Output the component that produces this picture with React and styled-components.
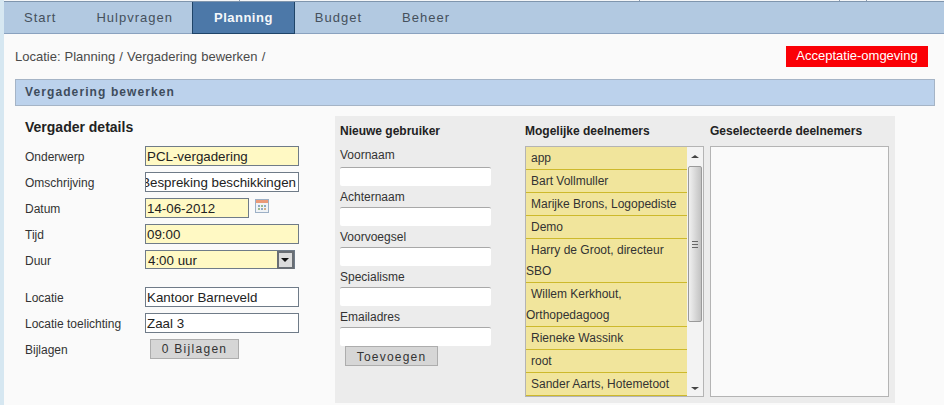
import React from 'react';
import styled, { createGlobalStyle } from 'styled-components';

const TABS = ['Start', 'Hulpvragen', 'Planning', 'Budget', 'Beheer'];
const TOP_CELLS = [236, 400, 200, 27];
const DETAIL_ROWS = [
  { label: 'Onderwerp', value: 'PCL-vergadering', filled: true },
  { label: 'Omschrijving', value: 'Bespreking beschikkingen', clipped: true },
];
const USER_FIELDS = ['Voornaam', 'Achternaam', 'Voorvoegsel', 'Specialisme', 'Emailadres'];
const PARTICIPANTS = [
  'app',
  'Bart Vollmuller',
  'Marijke Brons, Logopediste',
  'Demo',
  'Harry de Groot, directeur SBO',
  'Willem Kerkhout, Orthopedagoog',
  'Rieneke Wassink',
  'root',
  'Sander Aarts, Hotemetoot',
];

function CalendarIcon() {
  return (
    <CalendarSvg width="14" height="14" viewBox="0 0 14 14">
      <rect x="0.5" y="0.5" width="13" height="13" fill="#f0f3f6" stroke="#9db0c6" />
      <rect x="1" y="1" width="12" height="3" fill="#eb9a78" />
      <rect x="3" y="6" width="2" height="2" fill="#8fa8c4" />
      <rect x="6" y="6" width="2" height="2" fill="#9dbb8c" />
      <rect x="9" y="6" width="2" height="2" fill="#8fa8c4" />
      <rect x="3" y="9" width="2" height="2" fill="#9dbb8c" />
      <rect x="6" y="9" width="2" height="2" fill="#8fa8c4" />
      <rect x="9" y="9" width="2" height="2" fill="#d2b088" />
    </CalendarSvg>
  );
}

export default function App() {
  return (
    <>
      <GlobalStyle />
      <Page>
        <TopLine>
          {TOP_CELLS.map((width) => (
            <TopCell key={width} $width={width} />
          ))}
        </TopLine>
        <NavBar>
          {TABS.map((tab) => (
            <Tab key={tab} $active={tab === 'Planning'}>
              {tab}
            </Tab>
          ))}
        </NavBar>
        <Content>
          <BreadcrumbRow>
            <Breadcrumb>
              Locatie:<Crumbs>Planning / Vergadering bewerken /</Crumbs>
            </Breadcrumb>
            <EnvBadge>Acceptatie-omgeving</EnvBadge>
          </BreadcrumbRow>
          <SectionBar>Vergadering bewerken</SectionBar>
          <Columns>
            <Details>
              <DetailsTitle>Vergader details</DetailsTitle>
              <FormGrid>
                {DETAIL_ROWS.map((row) => (
                  <React.Fragment key={row.label}>
                    <FieldLabel>{row.label}</FieldLabel>
                    <TextBox $filled={row.filled} $clipped={row.clipped}>
                      <span>{row.value}</span>
                    </TextBox>
                  </React.Fragment>
                ))}
                <FieldLabel>Datum</FieldLabel>
                <DateRow>
                  <TextBox $filled $width={104}>
                    <span>14-06-2012</span>
                  </TextBox>
                  <CalendarIcon />
                </DateRow>
                <FieldLabel>Tijd</FieldLabel>
                <TextBox $filled>
                  <span>09:00</span>
                </TextBox>
                <FieldLabel>Duur</FieldLabel>
                <SelectBox>
                  <span>4:00 uur</span>
                  <SelectArrow />
                </SelectBox>
                <Spacer />
                <FieldLabel>Locatie</FieldLabel>
                <TextBox>
                  <span>Kantoor Barneveld</span>
                </TextBox>
                <FieldLabel>Locatie toelichting</FieldLabel>
                <TextBox>
                  <span>Zaal 3</span>
                </TextBox>
                <FieldLabel>Bijlagen</FieldLabel>
                <AttachButton>0 Bijlagen</AttachButton>
              </FormGrid>
            </Details>
            <GreyPanel>
              <NewUser>
                <ColumnTitle>Nieuwe gebruiker</ColumnTitle>
                {USER_FIELDS.map((field, index) => (
                  <UserField key={field}>
                    <UserLabel $first={index === 0}>{field}</UserLabel>
                    <UserInput />
                  </UserField>
                ))}
                <AddButton>Toevoegen</AddButton>
              </NewUser>
              <ListColumn>
                <ColumnTitle>Mogelijke deelnemers</ColumnTitle>
                <ListBox>
                  <ListItems>
                    {PARTICIPANTS.map((name) => (
                      <ListItem key={name}>{name}</ListItem>
                    ))}
                  </ListItems>
                  <ScrollBar>
                    <ArrowUp />
                    <Thumb>
                      <Grip />
                    </Thumb>
                    <ArrowDown />
                  </ScrollBar>
                </ListBox>
              </ListColumn>
              <ListColumn>
                <ColumnTitle>Geselecteerde deelnemers</ColumnTitle>
                <ListBox />
              </ListColumn>
            </GreyPanel>
          </Columns>
        </Content>
      </Page>
    </>
  );
}

const GlobalStyle = createGlobalStyle`
  html, body {
    margin: 0;
    padding: 0;
    height: 405px;
    overflow: hidden;
    background: #fafafa;
    font-family: "Liberation Sans", Arial, sans-serif;
  }
  * {
    box-sizing: border-box;
  }
`;

const Page = styled.div`
  height: 405px;
  border-left: 4px solid #d6e7f1;
  overflow: hidden;
`;

const TopLine = styled.div`
  height: 2px;
  display: flex;
  background: #f4f6f8;
  border-bottom: 1px solid #7f95ad;
`;

const TopCell = styled.div`
  width: ${({ $width }) => $width}px;
  border-right: 1px solid #8a9bb0;
`;

const NavBar = styled.nav`
  height: 32px;
  display: flex;
  background: #b2c9e1;
  border-bottom: 1px solid #8aa2bf;
`;

const Tab = styled.div`
  height: ${({ $active }) => ($active ? '32px' : '31px')};
  margin-left: ${({ $active }) => ($active ? '-1px' : '0')};
  padding: 0 ${({ $active }) => ($active ? '21px' : '20px')};
  display: flex;
  align-items: center;
  font-size: 13px;
  letter-spacing: ${({ $active }) => ($active ? '0.5px' : '1px')};
  color: ${({ $active }) => ($active ? '#f4f7fa' : '#45505c')};
  font-weight: ${({ $active }) => ($active ? 'bold' : 'normal')};
  background: ${({ $active }) => ($active ? '#4c78a8' : 'transparent')};
  border: ${({ $active }) => ($active ? '1px solid #1f4468' : 'none')};
  border-top: none;
`;

const Content = styled.main`
  padding: 0 9px 0 11px;
`;

const BreadcrumbRow = styled.div`
  height: 45px;
  padding: 12px 7px 0 0;
  display: flex;
  justify-content: space-between;
  align-items: flex-start;
`;

const Breadcrumb = styled.div`
  height: 21px;
  line-height: 21px;
  font-size: 13px;
  color: #4a4a4a;
`;

const Crumbs = styled.span`
  margin-left: 4px;
  word-spacing: 0.5px;
`;

const EnvBadge = styled.div`
  width: 142px;
  height: 21px;
  line-height: 20px;
  text-align: center;
  font-size: 13px;
  color: #fff;
  background: #fa0006;
`;

const SectionBar = styled.h1`
  margin: 0;
  height: 27px;
  line-height: 25px;
  padding-left: 9px;
  font-size: 12px;
  font-weight: bold;
  letter-spacing: 1.1px;
  color: #3e4c5c;
  background: #bcd2ec;
  border: 1px solid #a5b4c6;
`;

const Columns = styled.div`
  display: flex;
  padding-top: 10px;
`;

const Details = styled.section`
  width: 320px;
  padding: 3px 0 0 10px;
`;

const DetailsTitle = styled.h2`
  margin: 0 0 11px;
  height: 16px;
  line-height: 16px;
  font-size: 14px;
  font-weight: bold;
  color: #222;
`;

const FormGrid = styled.div`
  display: grid;
  grid-template-columns: 120px 154px;
  row-gap: 6px;
`;

const FieldLabel = styled.label`
  height: 20px;
  line-height: 22px;
  font-size: 12px;
  color: #333;
`;

const TextBox = styled.div`
  width: ${({ $width }) => ($width ? `${$width}px` : '154px')};
  height: 20px;
  padding: 1px 2px 0 1px;
  display: flex;
  align-items: center;
  justify-content: ${({ $clipped }) => ($clipped ? 'flex-end' : 'flex-start')};
  overflow: hidden;
  white-space: nowrap;
  font-size: 13.33px;
  color: #222;
  background: ${({ $filled }) => ($filled ? '#fff9c4' : '#fff')};
  border: 1px solid #6f7b88;
`;

const DateRow = styled.div`
  display: flex;
  align-items: flex-start;
`;

const CalendarSvg = styled.svg`
  margin: 1px 0 0 6px;
`;

const SelectBox = styled.div`
  width: 150px;
  height: 19px;
  padding: 1px 0 0 2px;
  display: flex;
  align-items: center;
  justify-content: space-between;
  font-size: 13.33px;
  color: #222;
  background: #fff9c4;
  border: 1px solid #6f7b88;
`;

const SelectArrow = styled.div`
  position: relative;
  width: 17px;
  height: 18px;
  margin-top: -1px;
  background: #dcdcdc;
  border: 2px solid #696e74;
  &::after {
    content: '';
    position: absolute;
    left: 2px;
    top: 5px;
    border-top: 4px solid #111;
    border-left: 4px solid transparent;
    border-right: 4px solid transparent;
  }
`;

const Spacer = styled.div`
  grid-column: 1 / -1;
  height: 5px;
`;

const AttachButton = styled.div`
  width: 89px;
  height: 20px;
  margin-left: 5px;
  line-height: 19px;
  text-align: center;
  font-size: 12px;
  letter-spacing: 1.3px;
  color: #333;
  background: #d6d6d6;
  border: 1px solid #adadad;
`;

const GreyPanel = styled.section`
  width: 560px;
  height: 287px;
  padding: 0 6px 0 5px;
  display: flex;
  background: #ececec;
`;

const NewUser = styled.div`
  width: 185px;
`;

const ColumnTitle = styled.h3`
  margin: 0;
  height: 30px;
  line-height: 30px;
  font-size: 12px;
  font-weight: bold;
  color: #222;
`;

const UserField = styled.div`
  height: 40px;
`;

const UserLabel = styled.div`
  height: 21px;
  line-height: ${({ $first }) => ($first ? '18px' : '23px')};
  font-size: 12px;
  color: #333;
`;

const UserInput = styled.div`
  width: 151px;
  height: 19px;
  background: #fff;
  border-top: 1px solid #a8a8a8;
  border-radius: 2px;
`;

const AddButton = styled.div`
  width: 93px;
  height: 20px;
  margin-left: 5px;
  line-height: 21px;
  text-align: center;
  font-size: 12px;
  letter-spacing: 1.2px;
  color: #333;
  background: #d6d6d6;
  border: 1px solid #adadad;
`;

const ListColumn = styled.div`
  width: 185px;
  &:last-child {
    width: 179px;
  }
`;

const ListBox = styled.div`
  width: 179px;
  height: 251px;
  display: flex;
  background: #fafafa;
  border: 1px solid #b4b4b4;
  overflow: hidden;
`;

const ListItems = styled.ul`
  margin: 0;
  padding: 0;
  width: 161px;
  list-style: none;
`;

const ListItem = styled.li`
  padding-top: 1px;
  line-height: 21px;
  text-indent: 5px;
  font-size: 12px;
  color: #333;
  background: #f1e59c;
  border-bottom: 1px solid #cdb92c;
`;

const ScrollBar = styled.div`
  position: relative;
  flex: 1;
  background: #f3f3f3;
`;

const ArrowUp = styled.div`
  position: absolute;
  top: 8px;
  left: 4px;
  border-bottom: 3px solid #444;
  border-left: 4px solid transparent;
  border-right: 4px solid transparent;
`;

const ArrowDown = styled.div`
  position: absolute;
  bottom: 6px;
  left: 4px;
  border-top: 3px solid #444;
  border-left: 4px solid transparent;
  border-right: 4px solid transparent;
`;

const Thumb = styled.div`
  position: absolute;
  top: 19px;
  left: 1px;
  width: 14px;
  height: 156px;
  display: flex;
  align-items: center;
  justify-content: center;
  background: linear-gradient(90deg, #f0f0f0, #c2c2c2);
  border: 1px solid #9a9a9a;
  border-radius: 2px;
`;

const Grip = styled.div`
  width: 6px;
  height: 7px;
  background: repeating-linear-gradient(180deg, #666 0 1px, transparent 1px 3px);
`;
